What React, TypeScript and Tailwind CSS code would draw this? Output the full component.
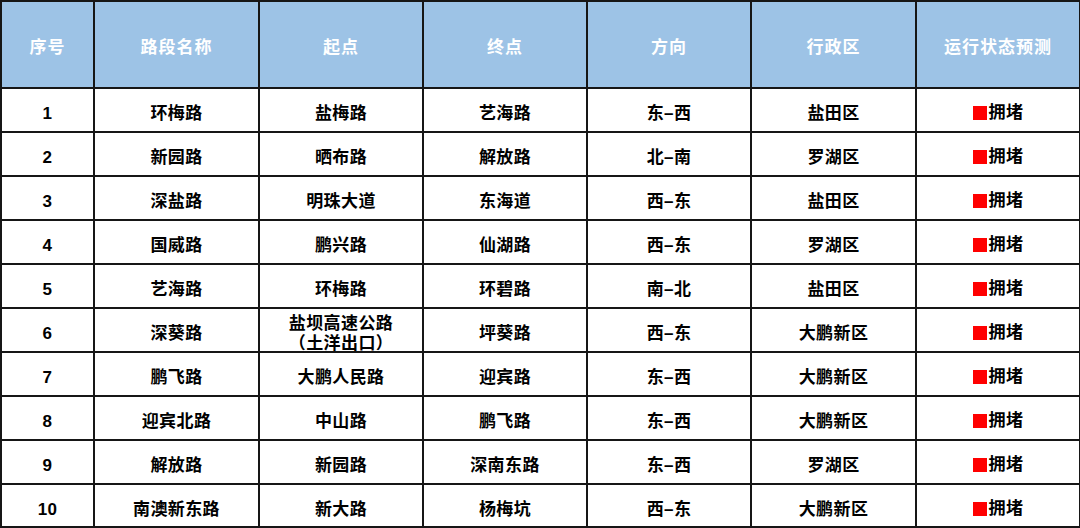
import React from "react";

const headers = ["序号", "路段名称", "起点", "终点", "方向", "行政区", "运行状态预测"];

const rows: string[][] = [
  ["1", "环梅路", "盐梅路", "艺海路", "东–西", "盐田区"],
  ["2", "新园路", "晒布路", "解放路", "北–南", "罗湖区"],
  ["3", "深盐路", "明珠大道", "东海道", "西–东", "盐田区"],
  ["4", "国威路", "鹏兴路", "仙湖路", "西–东", "罗湖区"],
  ["5", "艺海路", "环梅路", "环碧路", "南–北", "盐田区"],
  ["6", "深葵路", "盐坝高速公路\n（土洋出口）", "坪葵路", "西–东", "大鹏新区"],
  ["7", "鹏飞路", "大鹏人民路", "迎宾路", "东–西", "大鹏新区"],
  ["8", "迎宾北路", "中山路", "鹏飞路", "东–西", "大鹏新区"],
  ["9", "解放路", "新园路", "深南东路", "东–西", "罗湖区"],
  ["10", "南澳新东路", "新大路", "杨梅坑", "西–东", "大鹏新区"],
];

const widths = [93, 165, 164, 164, 164, 165, 164];

export default function App() {
  return (
    <div
      className="w-[1080px] h-[528px] bg-white overflow-hidden"
      style={{ fontFamily: '"Liberation Sans", "Noto Sans CJK SC", sans-serif' }}
    >
      <table className="border-collapse table-fixed w-[1080px]">
        <colgroup>
          {widths.map((w, i) => (
            <col key={i} style={{ width: w }} />
          ))}
        </colgroup>
        <thead>
          <tr className="h-[87px] bg-[#9dc3e6]">
            {headers.map((h) => (
              <th
                key={h}
                className="border-2 border-[#161616] p-0 text-white font-bold text-[17px] text-center align-middle tracking-[1px]"
              >
                <span className="block translate-y-[3px]">{h}</span>
              </th>
            ))}
          </tr>
        </thead>
        <tbody>
          {rows.map((r, ri) => (
            <tr key={r[0]} className={ri === rows.length - 1 ? "h-[43px]" : "h-[44px]"}>
              {r.map((c, i) => (
                <td
                  key={i}
                  className="border-2 border-[#161616] p-0 text-black font-bold text-[17px] tracking-[0.4px] text-center align-middle leading-[20px] whitespace-pre-line"
                >
                  <span className="block translate-y-[4px]">{c}</span>
                </td>
              ))}
              <td className="border-2 border-[#161616] p-0 text-black font-bold text-[17px] tracking-[0.4px] text-center align-middle leading-[20px]">
                <span className="inline-flex items-center translate-y-[4px]">
                  <span className="inline-block w-[14px] h-[14px] bg-[#ff0000] mr-[2px]" />
                  拥堵
                </span>
              </td>
            </tr>
          ))}
        </tbody>
      </table>
    </div>
  );
}
